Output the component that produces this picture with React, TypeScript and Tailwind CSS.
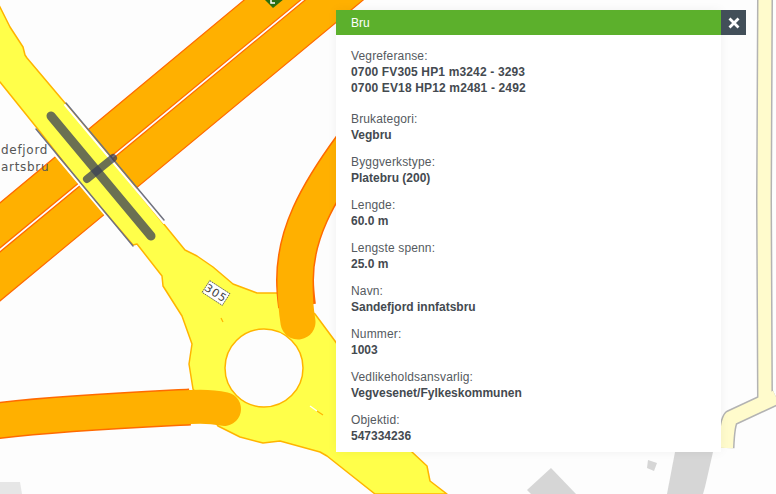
const fields = [
  { label: "Brukategori:", value: "Vegbru" },
  { label: "Byggverkstype:", value: "Platebru (200)" },
  { label: "Lengde:", value: "60.0 m" },
  { label: "Lengste spenn:", value: "25.0 m" },
  { label: "Navn:", value: "Sandefjord innfatsbru" },
  { label: "Nummer:", value: "1003" },
  { label: "Vedlikeholdsansvarlig:", value: "Vegvesenet/Fylkeskommunen" },
  { label: "Objektid:", value: "547334236" },
];

const yellowRoad =
  "-5,-2 0,7 10,27 23,47 25,55 27,58 65,103 185,250 197,256 213,267 233,284 257,293 277,293 315,314 335,341 412,452 427,466 430,481 447,494 375,494 327,456 320,452 280,441 263,443 240,437 218,426 193,389 189,364 192,344 182,316 163,286 162,276 137,244 133,245 80,183 37,128 0,82 -5,78";

const MapLayer = () => {
  return (
    <svg className="absolute inset-0" width="776" height="494" viewBox="0 0 776 494">
      {/* bygninger */}
      <polygon points="675,452 713,452 705,487 703,494 667,494" fill="#d6d6d6" />
      <polygon points="648,460 657,463 654,471 647,468" fill="#d6d6d6" />
      <polygon points="551,468 576,494 531,494 527,490" fill="#d6d6d6" />
      <polygon points="0,482 20,482 22,494 0,494" fill="#e6e6e6" />

      {/* fylkesvei til hoyre */}
      <g fill="none" strokeLinejoin="round">
        <path d="M776 397 L731 418 Q727 422 726 448" stroke="#b3b3b3" strokeWidth="17" />
        <path d="M765 0 L764 200 L765 400" stroke="#b3b3b3" strokeWidth="16" />
        <path d="M776 397 L731 418 Q727 422 726 448" stroke="#fffbcc" strokeWidth="14" />
        <path d="M765 0 L764 200 L765 402" stroke="#fffbcc" strokeWidth="13" />
      </g>

      {/* E18 */}
      <polygon points="-5,207 249,-4 305.5,-4 -5,252" fill="#ffb000" stroke="#ff6a00" strokeWidth="1.2" />
      <polygon points="-5,256 310,-4 368,-4 -5,305" fill="#ffb000" stroke="#ff6a00" strokeWidth="1.2" />

      {/* skilt */}
      <polygon points="264,-1 273,8 284,-1" fill="#2a6e12" />
      <path d="M271 -1 L271 3 L275 3" fill="none" stroke="#ffffff" strokeWidth="1.5" />

      {/* gul vei og rundkjoring */}
      <polygon points={yellowRoad} fill="#ffff4a" stroke="#ffb400" strokeWidth="1.5" strokeLinejoin="round" />
      <circle cx="264" cy="368" r="39" fill="#fdfdfd" stroke="#ffb400" strokeWidth="1.5" />
      <path d="M221 318 L223 322" stroke="#ffb400" strokeWidth="1.2" />
      <path d="M310 406 L317 411" stroke="#ffffff" strokeWidth="1.2" />
      <path d="M317 411 L323 415" stroke="#ffb400" strokeWidth="1.2" />

      {/* ramper */}
      <g fill="none">
        <path d="M352 146 C316 195 295 235 295 280 C295 290 296 298 297 306" stroke="#ff6a00" strokeWidth="38" />
        <path d="M352 146 C316 195 295 235 295 280 C295 295 296 310 298 322" stroke="#ffb000" strokeWidth="35" strokeLinecap="round" />
        <path d="M-5 421 C60 413 130 410 190 407" stroke="#ff6a00" strokeWidth="37" />
        <path d="M-5 421 C60 413 130 410 190 407 C205 406 215 407 224 409" stroke="#ffb000" strokeWidth="34" strokeLinecap="round" />
      </g>

      {/* bru */}
      <g strokeLinecap="round">
        <path d="M65 105 L164 223" stroke="#ffffff" strokeWidth="2" />
        <path d="M35 131 L134 249" stroke="#ffffff" strokeWidth="2" />
        <path d="M66 103 L164 220" stroke="#70727f" strokeWidth="1.5" />
        <path d="M36 129 L133 246" stroke="#70727f" strokeWidth="1.5" />
        <path d="M51 116 L151 236" stroke="#394056" strokeOpacity="0.75" strokeWidth="9" />
        <path d="M87 179 L113 158" stroke="#394056" strokeOpacity="0.75" strokeWidth="8" />
      </g>

      {/* vegnummer */}
      <g transform="translate(216 293) rotate(33)">
        <rect x="-12" y="-7" width="24" height="14" fill="#ffffff" stroke="#444444" strokeWidth="0.8" strokeDasharray="1.5 0.8" />
        <text x="0" y="4" textAnchor="middle" fontSize="11" letterSpacing="1" fill="#444444" fontFamily="'DejaVu Sans', sans-serif">
          305
        </text>
      </g>

      {/* stedsnavn */}
      <g fontSize="12" letterSpacing="0.7" fill="#555555" fontFamily="'DejaVu Sans', sans-serif">
        <text x="1" y="154">defjord</text>
        <text x="1" y="171">artsbru</text>
      </g>
    </svg>
  );
};

const App = () => {
  return (
    <div className="relative w-[776px] h-[494px] overflow-hidden bg-[#fdfdfd] font-['Liberation_Sans',Arial,sans-serif] text-[12px] leading-[16px]">
      <MapLayer />
      <div className="absolute left-[336px] top-[10px] w-[385px] h-[442px] bg-white shadow-[0_0_10px_rgba(0,0,0,0.05)]">
        <div className="h-[25px] bg-[#5cb02c] text-white pl-[15px] flex items-center">Bru</div>
        <button className="absolute top-0 -right-[25px] w-[25px] h-[25px] bg-[#424f59] flex items-center justify-center">
          <svg width="12" height="12" viewBox="0 0 12 12">
            <path d="M1.5 1.5 L10.5 10.5 M10.5 1.5 L1.5 10.5" stroke="#ffffff" strokeWidth="2.8" />
          </svg>
        </button>
        <div className="pl-[15px] pt-[13px] text-[#555a60] tracking-[0.15px]">
          <div className="mb-[15px]">
            <div>Vegreferanse:</div>
            <div className="font-bold text-[#444a50]">0700 FV305 HP1 m3242 - 3293</div>
            <div className="font-bold text-[#444a50]">0700 EV18 HP12 m2481 - 2492</div>
          </div>
          {fields.map((field) => (
            <div key={field.label} className="mb-[11px]">
              <div>{field.label}</div>
              <div className="font-bold text-[#444a50] tracking-[0px]">{field.value}</div>
            </div>
          ))}
        </div>
      </div>
    </div>
  );
};

export default App;
